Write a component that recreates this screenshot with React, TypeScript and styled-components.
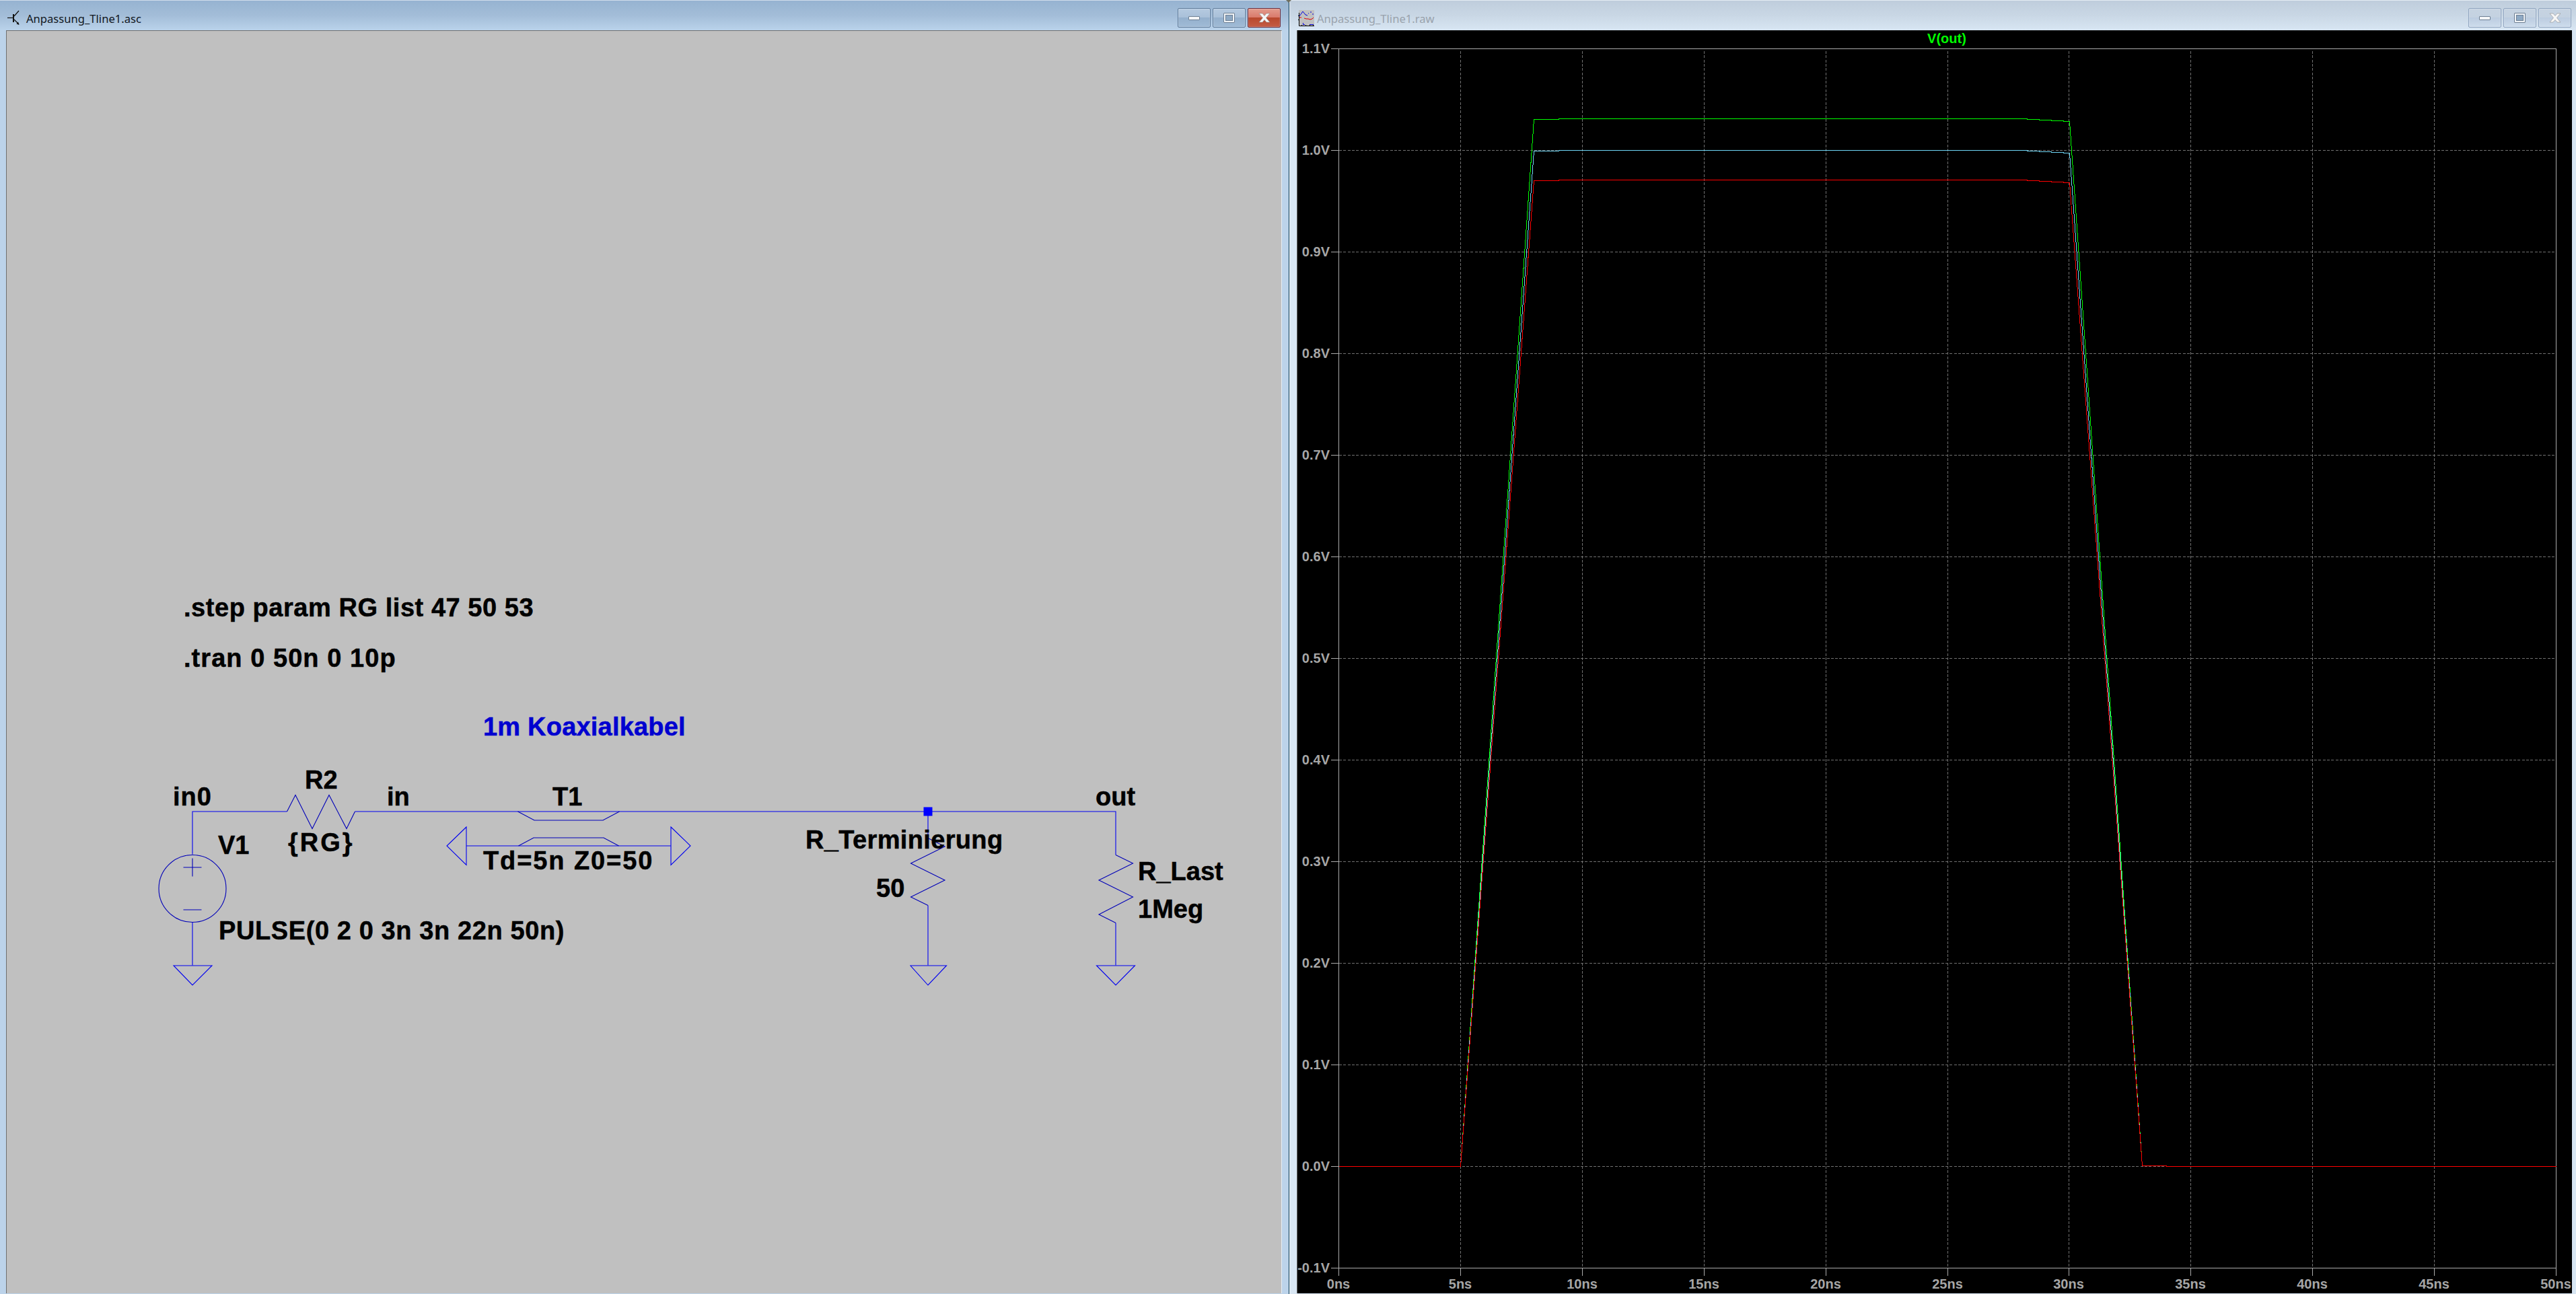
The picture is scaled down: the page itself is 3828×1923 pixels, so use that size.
import React from "react";
import styled, { createGlobalStyle } from "styled-components";

const GlobalStyle = createGlobalStyle`
  html, body {
    margin: 0;
    padding: 0;
    width: 3828px;
    height: 1923px;
    overflow: hidden;
    background: #d8e6f3;
  }
`;

const xTicks = Array.from({ length: 11 }, (_, i) => ({
  x: Math.round(1989 + i * 180.9),
  label: `${i * 5}ns`,
}));

const yTicks = Array.from({ length: 13 }, (_, i) => ({
  y: 72 + i * 151,
  label: `${((11 - i) / 10).toFixed(1)}V`,
}));

const trace = (rise: number, fall: number, top: number) =>
  [
    [1989, 1733],
    [2170, 1733],
    [2279, rise],
    [2316, rise],
    [2316, rise - 1],
    [3012, rise - 1],
    [3012, rise],
    [3030, rise],
    [3030, rise + 1],
    [3048, rise + 1],
    [3048, rise + 2],
    [3066, rise + 2],
    [3066, rise + 3],
    [3075, fall],
    [3183, top],
    [3219, top],
    [3219, 1733],
    [3798, 1733],
  ]
    .map((p) => `${p[0] + 0.5},${p[1] + 0.5}`)
    .join(" ");

// track is the extra letter spacing, the original text is hinted wider than Liberation
const schematicLabels = [
  { x: 273, y: 916, text: ".step param RG list 47 50 53", track: 0.55 },
  { x: 273, y: 991, text: ".tran 0 50n 0 10p", track: 1.05 },
  { x: 257, y: 1197, text: "in0", track: 1 },
  { x: 453, y: 1172, text: "R2", track: 0 },
  { x: 575, y: 1197, text: "in", track: 0 },
  { x: 324, y: 1269, text: "V1", track: 0 },
  { x: 428, y: 1265, text: "{RG}", track: 3 },
  { x: 325, y: 1396, text: "PULSE(0 2 0 3n 3n 22n 50n)", track: 0.6 },
  { x: 821, y: 1197, text: "T1", track: 0 },
  { x: 718, y: 1292, text: "Td=5n Z0=50", track: 1.9 },
  { x: 1628, y: 1197, text: "out", track: 0 },
  { x: 1197, y: 1261, text: "R_Terminierung", track: 0.35 },
  { x: 1302, y: 1333, text: "50", track: 0 },
  { x: 1691, y: 1308, text: "R_Last", track: 0 },
  { x: 1691, y: 1364, text: "1Meg", track: 0 },
];

const TransistorIcon = () => (
  <svg width="18" height="24" viewBox="11 14 18 24">
    <path d="M11 25.5H19" stroke="#111" strokeWidth="1.2" fill="none" />
    <path d="M20 20V32" stroke="#111" strokeWidth="2" fill="none" />
    <path d="M21 23L28 15M21 28L28 35" stroke="#111" strokeWidth="1.2" fill="none" />
    <path d="M28.5 36L24.5 34.5L27 31.5Z" fill="#111" />
  </svg>
);

const PlotIcon = () => (
  <svg width="24" height="24" viewBox="0 0 24 24">
    <rect x="1" y="0" width="23" height="23" fill="#c0c0c0" />
    <path d="M1.5 4V23.5H24" stroke="#000" fill="none" />
    <path d="M0 8.5H2M0 14.5H2M5.5 22V24M11.5 22V24M17.5 22V24M22.5 22V24" stroke="#000" fill="none" />
    <path d="M2 9L7 2L11 7L14 8" stroke="#0000e0" fill="none" />
    <path d="M15 5H16M18 3H20M22 5V7" stroke="#0000e0" fill="none" />
    <path d="M2 11H5M9 12L12 13H15L18 14L21 13L23 11" stroke="#e00000" fill="none" />
    <path d="M7.5 19V21.5H10M17 21.5H23" stroke="#0000e0" fill="none" />
  </svg>
);

const MinGlyph = styled.span`
  width: 17px;
  height: 6px;
  box-sizing: border-box;
  background: #f4f6f8;
  border: 1px solid #6d7f93;
  border-radius: 1px;
`;

const MaxGlyph = styled.span`
  width: 17px;
  height: 15px;
  box-sizing: border-box;
  background: #8ea9c4;
  border: 3px solid #f0f3f6;
  outline: 1px solid #6d7f93;
  outline-offset: -1px;
  box-shadow: inset 0 0 0 1px #6d7f93;
  border-radius: 1px;
`;

const CloseGlyph = () => (
  <svg width="18" height="15" viewBox="0 0 18 15">
    <path
      d="M1 1H6L9 4.5L12 1H17L11.5 7.5L17 14H12L9 10.5L6 14H1L6.5 7.5Z"
      fill="#f6f6f6"
      stroke="#8d8d8d"
      strokeWidth="0.6"
    />
  </svg>
);

const App = () => {
  return (
    <>
      <GlobalStyle />
      <Desktop>
        <Window $active $width="1915px">
          <TitleBar $active $right={12}>
            <IconSlot>
              <TransistorIcon />
            </IconSlot>
            <TitleText $active>Anpassung_Tline1.asc</TitleText>
            <WindowControls>
              <ControlButton $active>
                <MinGlyph />
              </ControlButton>
              <ControlButton $active>
                <MaxGlyph />
              </ControlButton>
              <ControlButton $active $close>
                <CloseGlyph />
              </ControlButton>
            </WindowControls>
          </TitleBar>
          <SchematicBody>
            <Canvas>
              <Drawing width="1893" height="1876" viewBox="10.5 45.5 1893 1876">
                <g fill="none" stroke="#0000f0" strokeWidth="1.1">
                  <path d="M286.5 1269V1205.5H427M528 1205.5H1658.5V1270M286.5 1370V1434M1379.5 1205.5V1245M1379.5 1345V1434M1658.5 1371V1434" />
                  <path d="M693.5 1256.5H997.5" />
                  <path d="M258.5 1434.5H315.5L286.5 1463.5Z" />
                  <path d="M1353.5 1434.5H1407L1379.5 1463.5Z" />
                  <path d="M1630 1434.5H1687L1658.5 1463.5Z" />
                  <path d="M693.5 1228.5L664.5 1256.5L693.5 1285Z" />
                  <path d="M997.5 1228.5L1026.5 1256.5L997.5 1285Z" />
                </g>
                <g fill="none" stroke="#0000b8" strokeWidth="1.1">
                  <path d="M427 1205.5L439.5 1181L464.5 1231L489.5 1181L515.5 1231L528 1205.5" />
                  <circle cx="286.5" cy="1320" r="50" />
                  <path d="M273 1288.5H300M286.5 1275V1302M273 1351.5H300" />
                  <path d="M770 1205.5L794.5 1218.5H896.5L921 1205.5" />
                  <path d="M771 1256.5L793.5 1244.5H897.5L920 1256.5" />
                  <path d="M1379.5 1245L1404.5 1257.5L1354 1282.5L1404.5 1307.5L1354 1332.5L1379.5 1345" />
                  <path d="M1658.5 1270L1684 1282.5L1633.5 1307.5L1684 1332.5L1633.5 1358.5L1658.5 1371" />
                </g>
                <rect x="1373" y="1199" width="13" height="13" fill="#0000ff" />
              </Drawing>
              {schematicLabels.map((l) => (
                <SchLabel key={l.text} $x={l.x} $y={l.y} $track={l.track}>
                  {l.text}
                </SchLabel>
              ))}
              <SchLabel $x={718} $y={1093} $track={0.2} $note>
                1m Koaxialkabel
              </SchLabel>
            </Canvas>
          </SchematicBody>
        </Window>
        <WindowDivider />
        <Window $width="1911px">
          <TitleBar $right={7} $left={12}>
            <IconSlot>
              <PlotIcon />
            </IconSlot>
            <TitleText>Anpassung_Tline1.raw</TitleText>
            <WindowControls>
              <ControlButton>
                <MinGlyph />
              </ControlButton>
              <ControlButton>
                <MaxGlyph />
              </ControlButton>
              <ControlButton>
                <CloseGlyph />
              </ControlButton>
            </WindowControls>
          </TitleBar>
          <PlotBody>
            <PlotPane>
              <Drawing width="1894" height="1877" viewBox="1928 45 1894 1877">
                <g stroke="#707070" strokeDasharray="4 2.3" shapeRendering="crispEdges">
                  {xTicks.slice(1, -1).map((t) => (
                    <line key={t.x} x1={t.x + 0.5} x2={t.x + 0.5} y1="76" y2="1884" />
                  ))}
                  {yTicks.slice(1, -1).map((t) => (
                    <line key={t.y} x1="1990" x2="3798" y1={t.y + 0.5} y2={t.y + 0.5} />
                  ))}
                </g>
                <g stroke="#ababab" fill="none" shapeRendering="crispEdges">
                  <rect x="1989.5" y="72.5" width="1809" height="1812" />
                  {xTicks.map((t) => (
                    <line key={t.x} x1={t.x + 0.5} x2={t.x + 0.5} y1="1884" y2="1896" />
                  ))}
                  {yTicks.map((t) => (
                    <line key={t.y} x1="1978" x2="1989" y1={t.y + 0.5} y2={t.y + 0.5} />
                  ))}
                </g>
                <g fill="none" shapeRendering="crispEdges">
                  <polyline points={trace(177, 180, 1732)} stroke="#00ff00" />
                  <polyline points={trace(224, 227, 1732)} stroke="#6fd6f5" />
                  <polyline points={trace(268, 271, 1732)} stroke="#ff0000" />
                </g>
              </Drawing>
              <TraceName>V(out)</TraceName>
              {yTicks.map((t) => (
                <YLabel key={t.label} $y={t.y}>
                  {t.label}
                </YLabel>
              ))}
              {xTicks.map((t) => (
                <XLabel key={t.label} $x={t.x}>
                  {t.label}
                </XLabel>
              ))}
            </PlotPane>
          </PlotBody>
        </Window>
        <CornerMark />
      </Desktop>
    </>
  );
};

export default App;

const Desktop = styled.div`
  position: relative;
  display: flex;
  width: 3828px;
  height: 1923px;
  overflow: hidden;
  font-family: "Liberation Sans", Arial, sans-serif;
`;

const Window = styled.div<{ $active?: boolean; $width: string }>`
  display: flex;
  flex-direction: column;
  width: ${(p) => p.$width};
  height: 100%;
  background: ${(p) => (p.$active ? "#bcd3ea" : "#d8e6f3")};
`;

const WindowDivider = styled.div`
  width: 2px;
  background: linear-gradient(90deg, #0c3c55 50%, #f2f6fa 50%);
`;

const CornerMark = styled.div`
  position: absolute;
  top: 0;
  left: 1911px;
  width: 0;
  height: 0;
  border-left: 4px solid transparent;
  border-right: 4px solid transparent;
  border-top: 4px solid #6f6f5f;
`;

const TitleBar = styled.div<{ $active?: boolean; $right: number; $left?: number }>`
  box-sizing: border-box;
  flex: 0 0 45px;
  display: flex;
  align-items: center;
  padding: 7px ${(p) => p.$right}px 0 ${(p) => p.$left ?? 11}px;
  border-top: 1px solid ${(p) => (p.$active ? "#cfdcea" : "#e4ebf2")};
  background: ${(p) =>
    p.$active
      ? "linear-gradient(180deg, #96b3d1 0%, #a3bdd8 50%, #bad3eb 100%)"
      : "linear-gradient(180deg, #bfcddc 0%, #c9d7e5 50%, #d8e6f3 100%)"};
`;

const IconSlot = styled.div`
  display: flex;
  align-items: center;
  width: 28px;
  height: 24px;
`;

const TitleText = styled.div<{ $active?: boolean }>`
  margin-top: 2px;
  font-family: "Noto Sans", "Open Sans", sans-serif;
  font-size: 16.6px;
  line-height: 24px;
  color: ${(p) => (p.$active ? "#12181f" : "#9aa3ad")};
  white-space: nowrap;
`;

const WindowControls = styled.div`
  display: flex;
  gap: 3px;
  margin-left: auto;
`;

const ControlButton = styled.div<{ $active?: boolean; $close?: boolean }>`
  box-sizing: border-box;
  width: 49px;
  height: 29px;
  display: flex;
  align-items: center;
  justify-content: center;
  border-radius: 2px;
  border: 1px solid ${(p) => (p.$close ? "#6a2a3a" : p.$active ? "#5f7b9a" : "#8fa4bf")};
  background: ${(p) =>
    p.$close
      ? "linear-gradient(180deg, #e39b8d 0%, #d97a6b 48%, #b8482d 50%, #c45c44 100%)"
      : p.$active
        ? "linear-gradient(180deg, #b5cae0 0%, #a9c0d9 48%, #94b0cd 50%, #a0bbd6 100%)"
        : "linear-gradient(180deg, #c6d3e1 0%, #c4d2e1 48%, #bccce0 50%, #cddcec 100%)"};
  box-shadow: inset 0 0 0 1px rgba(255, 255, 255, 0.2);
`;

const SchematicBody = styled.div`
  flex: 1;
  display: flex;
  padding: 0 10px 1px 9px;
  min-height: 0;
`;

const Canvas = styled.div`
  position: relative;
  flex: 1;
  background: #c0c0c0;
  border-top: 1px solid #6f6f6f;
  border-left: 1px solid #6f6f6f;
  border-right: 1px solid #e6edf4;
`;

const Drawing = styled.svg`
  display: block;
`;

const SchLabel = styled.span<{ $x: number; $y: number; $track: number; $note?: boolean }>`
  position: absolute;
  left: ${(p) => p.$x - 10}px;
  top: ${(p) => p.$y - 46 - 32}px;
  font-size: 38px;
  font-weight: 700;
  line-height: 1;
  letter-spacing: ${(p) => p.$track}px;
  -webkit-text-stroke: 0.5px currentColor;
  color: ${(p) => (p.$note ? "#0000d0" : "#000")};
  white-space: nowrap;
`;

const PlotBody = styled.div`
  flex: 1;
  display: flex;
  padding: 0 6px 1px 10px;
  min-height: 0;
`;

const PlotPane = styled.div`
  position: relative;
  flex: 1;
  background: #000;
  border-left: 1px solid #6f6f6f;
`;

const AxisLabel = styled.span`
  position: absolute;
  font-size: 20px;
  font-weight: 700;
  line-height: 24px;
  color: #a6a6a6;
  white-space: nowrap;
`;

const YLabel = styled(AxisLabel)<{ $y: number }>`
  left: 0;
  width: 48px;
  top: ${(p) => p.$y - 45 - 12}px;
  text-align: right;
`;

const XLabel = styled(AxisLabel)<{ $x: number }>`
  left: ${(p) => p.$x - 1928}px;
  top: 1851px;
  transform: translateX(-50%);
`;

const TraceName = styled(AxisLabel)`
  left: 965px;
  top: 0;
  transform: translateX(-50%);
  color: #00ff00;
`;
